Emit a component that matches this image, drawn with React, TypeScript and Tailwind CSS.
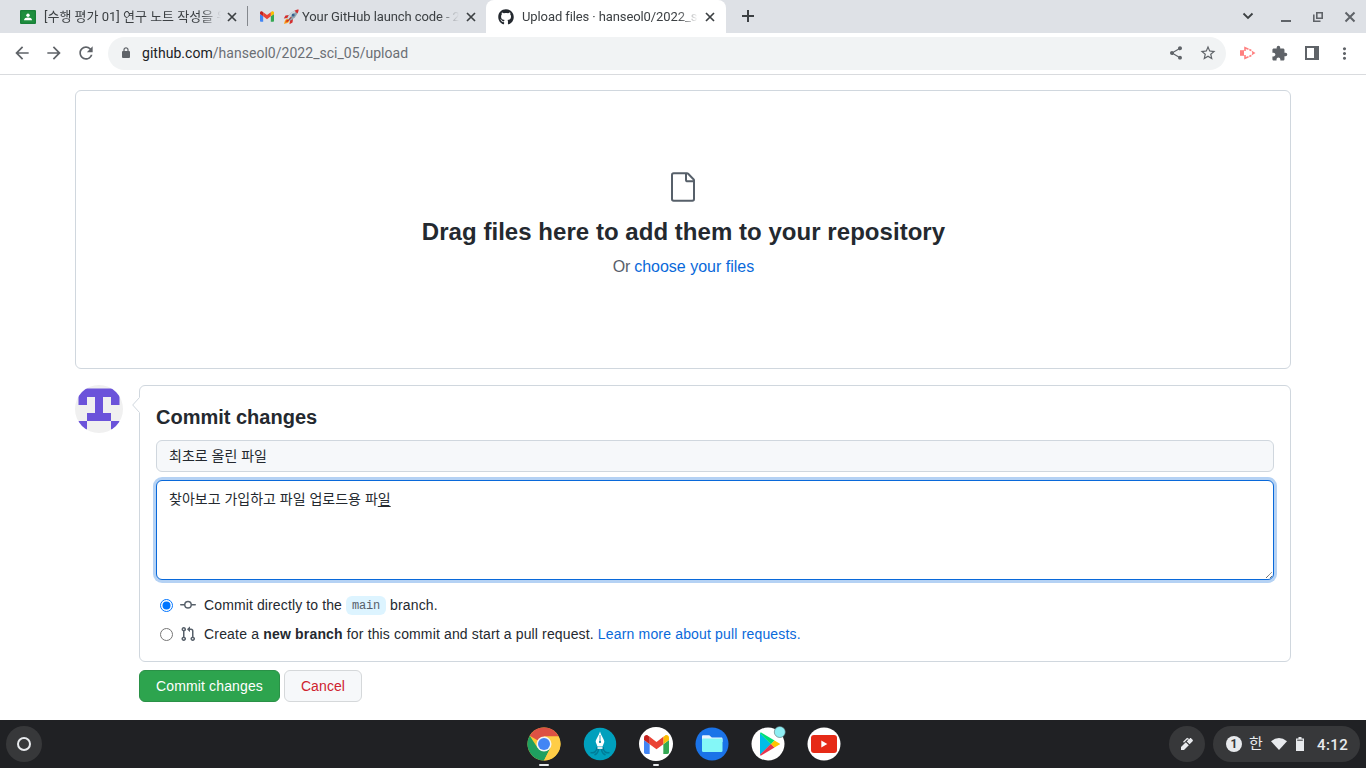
import React from 'react';
import {
  MdArrowBack, MdArrowForward, MdRefresh, MdShare, MdStarBorder,
  MdExtension, MdMoreVert,
} from 'react-icons/md';
import { FaGithub } from 'react-icons/fa';

function ClassroomIcon() {
  return (
    <svg width="16" height="14" viewBox="0 0 16 14" className="shrink-0">
      <rect width="16" height="14" rx="1" fill="#188038" />
      <rect x="1.3" y="1.3" width="13.4" height="11.4" fill="#1e8e3e" />
      <circle cx="8" cy="5.2" r="1.700" fill="#fff" />
      <path d="M4 10.200c0-1.900 2-2.600 4-2.600s4 .7 4 2.600z" fill="#fff" />
    </svg>
  );
}

function TabClose() {
  return (
    <svg width="14" height="14" viewBox="0 0 14 14" className="shrink-0">
      <path d="m3 3 8 8m0-8-8 8" stroke="#3c4043" strokeWidth="1.700" />
    </svg>
  );
}

function GmailMark({ width, height }: { width: number; height: number }) {
  return (
    <svg width={width} height={height} viewBox="52 42 88 66" className="shrink-0">
      <path fill="#4285f4" d="M58 108h14V74L52 59v43c0 3.320 2.690 6 6 6" />
      <path fill="#34a853" d="M120 108h14c3.320 0 6-2.690 6-6V59l-20 15" />
      <path fill="#fbbc04" d="M120 48v26l20-15v-8c0-7.420-8.470-11.650-14.400-7.200" />
      <path fill="#ea4335" d="M72 74V48l24 18 24-18v26L96 92" />
      <path fill="#c5221f" d="M52 51v8l20 15V48l-5.600-4.200c-5.940-4.450-14.400-.220-14.400 7.200" />
    </svg>
  );
}

function Rocket() {
  return (
    <svg width="16" height="16" viewBox="0 0 16 16" className="shrink-0">
      <path d="M6 6 2.500 6.500.8 9.500l4-.5zM10 10l-.5 3.500L6.500 15.300 7 11z" fill="#d32f2f" />
      <path d="M4.500 9.500C2 10 1.600 12.500 1 15c2.500-.5 5-1 5.500-3.500z" fill="#f9a825" />
      <path d="M4.500 10.500C3 11.300 2.800 12 2.300 13.700 4 13.300 5 12.800 5.700 11.500z" fill="#e64a19" />
      <path d="M4.200 9.500C6 5 9 2 13 1.400l1.700 1.700C14 7 11 10 6.600 12z" fill="#90a4ae" />
      <path d="M4.200 9.500C6 5 9 2 13 1.400l.8.8C9.500 5 7.300 7.500 5.400 10.700z" fill="#cfd8dc" />
      <path d="M11.500 1.800C13 .8 14.500.6 15.600.5c0 1.200-.3 2.700-1.200 4z" fill="#d32f2f" />
      <circle cx="10.200" cy="5.900" r="1.500" fill="#37618e" />
      <path d="m4 12 4-4 .6.6-4 4z" fill="#b71c1c" />
    </svg>
  );
}

function TabTitle({ children }: { children: React.ReactNode }) {
  return (
    <span className="min-w-0 flex-1 overflow-hidden whitespace-nowrap text-[13px] leading-[18px] text-[#3c4043] [mask-image:linear-gradient(to_right,#000_calc(100%-20px),transparent)]">
      {children}
    </span>
  );
}

function TabStrip() {
  return (
    <div className="flex h-[33px] bg-[#dee1e6] font-[Roboto,'Noto_Sans_CJK_KR',sans-serif]">
      <div className="flex w-[247px] items-center pl-5 pr-[8px]">
        <ClassroomIcon />
        <span className="ml-2 mr-1 flex w-[177px]"><TabTitle>[수행 평가 01] 연구 노트 작성을 위</TabTitle></span>
        <TabClose />
      </div>
      <div className="mt-[6px] h-5 w-px bg-[#84888d]" />
      <div className="flex w-[238px] items-center pl-[12px]">
        <GmailMark width={14} height={11} />
        <span className="ml-[9px] flex"><Rocket /></span>
        <span className="ml-[3px] mr-[5px] flex w-[157px] tracking-[-0.1px]"><TabTitle>Your GitHub launch code - 2</TabTitle></span>
        <TabClose />
      </div>
      <div className="flex w-[240px] items-center rounded-t-lg bg-white pl-3">
        <FaGithub size={16} className="shrink-0 text-[#24292f]" />
        <span className="ml-2 mr-[5px] flex w-[176px] tracking-[-0.1px]"><TabTitle>Upload files · hanseol0/2022_sc</TabTitle></span>
        <TabClose />
      </div>
      <div className="flex flex-1 items-center pl-[12px]">
        <svg width="20" height="20" viewBox="0 0 20 20" className="-mt-px">
          <path d="M10 4v12M4 10h12" stroke="#3c4043" strokeWidth="2" />
        </svg>
        <div className="ml-auto flex items-center">
          <svg width="12" height="8" viewBox="0 0 12 8" className="-mt-px mr-[27px]">
            <path d="m1.500 1.500 4.500 4.500 4.500-4.500" fill="none" stroke="#3c4043" strokeWidth="1.800" />
          </svg>
          <span className="mr-[22px] mt-[8px] h-[2px] w-[10px] bg-[#5f6368]" />
          <svg width="10" height="10" viewBox="0 0 10 10" className="mr-[17px]">
            <path d="M3.800.8h5.400v5.400H3.800zM.8 2.500v6.700h6.700" fill="none" stroke="#5f6368" strokeWidth="1.600" />
          </svg>
          <svg width="20" height="16" viewBox="0 0 20 16" className="mr-[6px]">
            <path d="m5.500 3.500 9 9m0-9-9 9" stroke="#5f6368" strokeWidth="2" />
          </svg>
        </div>
      </div>
    </div>
  );
}

function Toolbar() {
  return (
    <div className="flex h-[42px] items-center border-b border-[#d9dbde] bg-white pb-[1px] font-[Roboto,sans-serif] text-[#5f6368]">
      <MdArrowBack size={20} className="ml-3" />
      <MdArrowForward size={20} className="ml-3" />
      <MdRefresh size={20} className="ml-3" />
      <div className="ml-3 flex h-[33px] w-[1118px] items-center rounded-full bg-[#f1f3f4] pl-[14px] pr-[9px]">
        <svg width="8" height="11" viewBox="0 0 8 11" className="mb-px">
          <path d="M2 5V2.800a2 2 0 0 1 4 0V5" fill="none" stroke="#5f6368" strokeWidth="1.200" />
          <rect y="4" width="8" height="7" rx="1" fill="#5f6368" />
        </svg>
        <span className="ml-[12px] flex-1 text-[14px] tracking-[0.03px] text-[#6b6f74]">
          <span className="text-[#202124]">github.com</span>/hanseol0/2022_sci_05/upload
        </span>
        <MdShare size={16} className="mr-[15px]" />
        <MdStarBorder size={18} />
      </div>
      <svg width="17" height="14" viewBox="0 0 17 14" className="ml-[13px]">
        <path d="M1 4.200h4v5.600H1z" fill="#ff8080" />
        <path d="M6 5V1.800L9.500 3.200M6 9v3.200l3.500-1.400" fill="none" stroke="#ff8080" strokeWidth="1.600" />
        <path d="m10.300 3.500 2 1M10.300 10.500l2-1" stroke="#ff8080" strokeWidth="1.500" />
        <path d="m12.500 4.400 4 2.600-4 2.600.8-2.600z" fill="#ff8080" />
      </svg>
      <MdExtension size={17} className="ml-[15px]" />
      <svg width="14" height="14" viewBox="0 0 14 14" className="ml-[17px]">
        <path d="M1 1h12v12H1z" fill="none" stroke="#5f6368" strokeWidth="2" />
        <path d="M9 1h4v12H9z" fill="#5f6368" />
      </svg>
      <MdMoreVert size={19} className="ml-[16px]" />
    </div>
  );
}

function Avatar() {
  return (
    <svg width="48" height="48" viewBox="0 0 48 48" className="shrink-0">
      <clipPath id="avatar-circle"><circle cx="24" cy="24" r="24" /></clipPath>
      <g clipPath="url(#avatar-circle)">
        <path d="M0 0h48v48H0z" fill="#f0f0f0" />
        <path d="M3.500 3.500h41V20h-8.500v-8h-8v16h8v8H12v-8h8V12h-8v8H3.500zM3.500 36H12v8.500H3.500zM36 36h8.500v8.500H36z" fill="#6b53da" />
      </g>
    </svg>
  );
}

function Page() {
  return (
    <main className="h-[645px] bg-white px-[75px] pt-[15px] font-['Liberation_Sans','Noto_Sans_CJK_KR',sans-serif] text-[14px] leading-[21px] text-[#24292f]">
      <section className="flex h-[279px] flex-col items-center rounded-md border border-[#d0d7de] pt-[80px]">
        <svg width="32" height="32" viewBox="0 0 24 24" fill="#57606a">
          <path fillRule="evenodd" d="M5 2.500a.5.5 0 00-.5.5v18a.5.5 0 00.5.5h14a.5.5 0 00.5-.5V8.500h-4a2 2 0 01-2-2v-4H5zm10 0v4a.5.5 0 00.5.5h4a.5.5 0 00-.146-.336l-4.018-4.018A.5.5 0 0015 2.500zM3 3a2 2 0 012-2h9.982a2 2 0 011.414.586l4.018 4.018A2 2 0 0121 7.018V21a2 2 0 01-2 2H5a2 2 0 01-2-2V3z" />
        </svg>
        <h1 className="mt-[11px] pl-px text-2xl font-bold leading-9 tracking-[0.04px]">Drag files here to add them to your repository</h1>
        <p className="mt-[5px] pl-px text-base leading-6 text-[#57606a]"><span className="tracking-[-0.3px]">Or </span><a className="text-[#0969da]">choose your files</a></p>
      </section>

      <div className="mt-4 flex gap-4">
        <Avatar />
        <form className="relative h-[277px] flex-1 rounded-md border border-[#d0d7de] px-4 pt-4">
          <svg width="9" height="16" viewBox="0 0 9 16" className="absolute -left-[8px] top-[11px]">
            <path d="M9 0H7.500v.5L.7 8l6.800 7.500v.5H9z" fill="#fff" />
            <path d="M7.500.5.7 8l6.800 7.500" fill="none" stroke="#d0d7de" />
          </svg>
          <h3 className="text-xl font-bold leading-[30px]">Commit changes</h3>
          <div className="mt-2 h-8 rounded-md border border-[#d0d7de] bg-[#f6f8fa] px-3 py-[5px] leading-5">최초로 올린 파일</div>
          <div className="relative mt-2 h-[100px] rounded-md border border-[#0969da] bg-white px-3 py-2 shadow-[0_0_0_3px_rgba(9,105,218,0.3)]">
            찾아보고 가입하고 파일 업로드용 파<span className="underline decoration-1 underline-offset-2 [text-decoration-skip-ink:none]">일</span>
            <svg width="8" height="8" viewBox="0 0 8 8" className="absolute bottom-0 right-0">
              <path d="M1 7 7 1M5 7l2-2" stroke="#555" strokeWidth="1" strokeDasharray="1.2 .4" />
            </svg>
          </div>
          <label className="mt-[15px] flex h-[21px] items-center">
            <svg width="13" height="13" viewBox="0 0 13 13" className="ml-1 mr-[7px]">
              <circle cx="6.500" cy="6.500" r="6" fill="#fff" stroke="#0075ff" />
              <circle cx="6.500" cy="6.500" r="4" fill="#0075ff" />
            </svg>
            <svg width="16" height="16" viewBox="0 0 16 16" fill="#57606a" className="mb-[2px] mr-2">
              <path fillRule="evenodd" d="M10.500 7.750a2.500 2.500 0 11-5 0 2.500 2.500 0 015 0zm1.430.750a4.002 4.002 0 01-7.860 0H.750a.750.750 0 110-1.500h3.320a4.001 4.001 0 017.860 0h3.320a.750.750 0 110 1.500h-3.320z" />
            </svg>
            <span className="tracking-[0.12px]">Commit directly to the</span>
            <span className="mx-1 h-[19px] rounded-md bg-[#ddf4ff] px-[6px] font-['Liberation_Mono',monospace] text-xs leading-[21px] tracking-[-0.2px] text-[#57606a]">main</span>
            <span className="tracking-[0.15px]">branch.</span>
          </label>
          <label className="mt-2 flex h-[21px] items-center">
            <svg width="13" height="13" viewBox="0 0 13 13" className="ml-1 mr-[7px]">
              <circle cx="6.500" cy="6.500" r="6" fill="#fff" stroke="#767676" />
            </svg>
            <svg width="16" height="16" viewBox="0 0 16 16" fill="#57606a" className="mb-[2px] mr-2">
              <path fillRule="evenodd" d="M7.177 3.073L9.573.677A.25.25 0 0110 .854v4.792a.25.25 0 01-.427.177L7.177 3.427a.25.25 0 010-.354zM3.750 2.500a.75.75 0 100 1.500.75.75 0 000-1.500zm-2.250.75a2.250 2.250 0 113 2.122v5.256a2.251 2.251 0 11-1.500 0V5.372A2.250 2.250 0 011.500 3.250zM11 2.500h-1V4h1a1 1 0 011 1v5.628a2.251 2.251 0 101.500 0V5A2.500 2.500 0 0011 2.500zm1 10.250a.75.75 0 111.500 0 .75.75 0 01-1.500 0zM3.750 12a.75.75 0 100 1.500.75.75 0 000-1.500z" />
            </svg>
            <span className="tracking-[0.18px]">Create a <b>new branch</b><span className="tracking-[0.14px]"> for this commit and start a pull request. </span><a className="tracking-[0.17px] text-[#0969da]">Learn more about pull requests.</a></span>
          </label>
        </form>
      </div>
      <div className="ml-16 mt-2 flex gap-1">
        <button className="h-8 w-[141px] rounded-md border border-[#2a9147] bg-[#2da44e] tracking-[0.14px] text-white">Commit changes</button>
        <button className="h-8 w-[78px] rounded-md border border-[#d5d8da] bg-[#f6f8fa] tracking-[0.1px] text-[#cf222e]">Cancel</button>
      </div>
    </main>
  );
}

function AppIcon({ running, children }: { running?: string; children: React.ReactNode }) {
  return (
    <div className="flex w-[34px] flex-col items-center pt-[7px]">
      {children}
      {running && <span className={`mt-[3px] h-[2px] rounded-full bg-[#e8eaed] ${running}`} />}
    </div>
  );
}

function Shelf() {
  return (
    <footer className="flex h-12 items-center justify-between bg-[#202124] px-[6px] font-[Roboto,'Noto_Sans_CJK_KR',sans-serif] text-[#e8eaed]">
      <div className="flex w-[193px]">
        <div className="flex size-9 items-center justify-center rounded-full bg-[#37383a]">
          <span className="size-[14px] rounded-full border-2 border-[#e8eaed]" />
        </div>
      </div>
      <div className="flex h-12 gap-[22px]">
        <AppIcon running="w-[10px]">
          <svg width="34" height="34" viewBox="0 0 34 34">
            <circle cx="17" cy="17" r="16.500" fill="#fbc934" />
            <path d="M17 17 2.710 8.750A16.500 16.500 0 0 1 31.300 8.750L31.500 9.500H17z" fill="#dd5144" />
            <path d="M2.710 8.750A16.500 16.500 0 0 0 17 33.500l6.500-12.750L17 17l-6.500 3.750z" fill="#1fa060" />
            <path d="M17 9.500h14.700A16.500 16.500 0 0 1 17 33.500l6.500-12.750z" fill="#ffcd46" />
            <circle cx="17" cy="17" r="7.500" fill="#f4f4f4" />
            <circle cx="17" cy="17" r="6" fill="#4285f4" />
          </svg>
        </AppIcon>
        <AppIcon>
          <svg width="34" height="34" viewBox="0 0 34 34">
            <circle cx="17" cy="17" r="16.200" fill="#00a0bd" />
            <path d="M14 20c0 5-3.500 6.500-6.500 5.500M15.500 21c0 5-2 6-4 7M20 20c0 5 3.500 6.500 6.500 5.500M18.500 21c0 5 2 6 4 7" fill="none" stroke="#007c98" strokeWidth="1.600" />
            <path d="M17 4.500c1 4 4.300 7.500 4.300 10.500L19.500 19.500h-5l-1.800-4.500C12.700 12 16 8.500 17 4.500z" fill="#fff" />
            <path d="M17 8v7" stroke="#00839d" strokeWidth=".8" />
            <circle cx="17" cy="15" r="1.100" fill="#00839d" />
            <path d="M14.500 20h5v2h-5z" fill="#d9e8ec" />
          </svg>
        </AppIcon>
        <AppIcon running="w-[6px]">
          <div className="flex size-[34px] items-center justify-center rounded-full bg-white">
            <GmailMark width={25} height={19} />
          </div>
        </AppIcon>
        <AppIcon>
          <svg width="34" height="34" viewBox="0 0 34 34">
            <circle cx="17" cy="17" r="16.500" fill="#1a73e8" />
            <path d="M7 9.500c0-.8.500-1.300 1.300-1.300h6l2.500 2.300h9.500c.800 0 1.200.5 1.200 1.200V15H7z" fill="#e8f4fd" />
            <rect x="7" y="11.500" width="20.500" height="13.500" rx="1.300" fill="#84f7f7" />
          </svg>
        </AppIcon>
        <AppIcon>
          <svg width="34" height="34" viewBox="0 0 34 34" className="overflow-visible">
            <circle cx="17" cy="17" r="16.500" fill="#fff" />
            <path d="M9 6v22l11-11z" fill="#00bde8" />
            <path d="M9 6.300c0-.8.500-1 1.200-.7L23.500 13.500 20 17.300z" fill="#00df76" />
            <path d="M9 27.700c0 .8.500 1 1.200.7l13.300-7.900L20 16.700z" fill="#e8354e" />
            <path d="m23.500 13.500 5 2.900c.7.400.7.800 0 1.200l-5 2.900L20 17z" fill="#ffc400" />
            <circle cx="28.800" cy="5" r="5.500" fill="#8eeef3" stroke="#5a7074" strokeWidth=".6" />
          </svg>
        </AppIcon>
        <AppIcon>
          <svg width="34" height="34" viewBox="0 0 34 34">
            <circle cx="17" cy="17" r="16.500" fill="#fff" />
            <rect x="4" y="8" width="26" height="18" rx="3" fill="#e62a17" />
            <path d="m14.300 13.500 6 3.500-6 3.500z" fill="#fff" />
          </svg>
        </AppIcon>
      </div>
      <div className="flex justify-end gap-2">
        <div className="flex size-9 items-center justify-center rounded-full bg-[#37383a]">
          <svg width="14" height="14" viewBox="0 0 14 14">
            <path d="m1 10 4.800-4.800 3 3L4 13H1z" fill="#e8eaed" />
            <path d="m3.500 5.200 3.700-3.700 1.600 1" fill="none" stroke="#e8eaed" strokeWidth="1.300" />
            <path d="m6.700 4.400 3.100-3c.5-.5 1-.5 1.500 0l1.300 1.300c.5.5.5 1 0 1.500l-3 3z" fill="#e8eaed" />
          </svg>
        </div>
        <div className="flex h-9 w-[147px] items-center rounded-full bg-[#37383a] pl-[13px]">
          <span className="flex size-4 items-center justify-center rounded-full bg-[#e8eaed] text-xs font-bold leading-4 text-[#37383a]">1</span>
          <span className="ml-[7px] w-[15px] text-[15px] leading-5">한</span>
          <svg width="16" height="12" viewBox="0 0 16 12" className="ml-[7px]">
            <path d="M0 3.200Q8-3 16 3.200L8 12z" fill="#e8eaed" />
          </svg>
          <svg width="8" height="14" viewBox="0 0 8 14" className="ml-[9px]">
            <path d="M2.500 0h3v1.500H8V14H0V1.500h2.500z" fill="#e8eaed" />
            <path d="M1.200 3.200h5.600" stroke="#37383a" strokeWidth="1" />
          </svg>
          <span className="ml-[13px] mt-[2px] text-[15px] font-medium leading-5 tracking-[0.4px]">4:12</span>
        </div>
      </div>
    </footer>
  );
}

export default function App() {
  return (
    <div className="h-[768px] w-[1366px] overflow-hidden">
      <TabStrip />
      <Toolbar />
      <Page />
      <Shelf />
    </div>
  );
}
